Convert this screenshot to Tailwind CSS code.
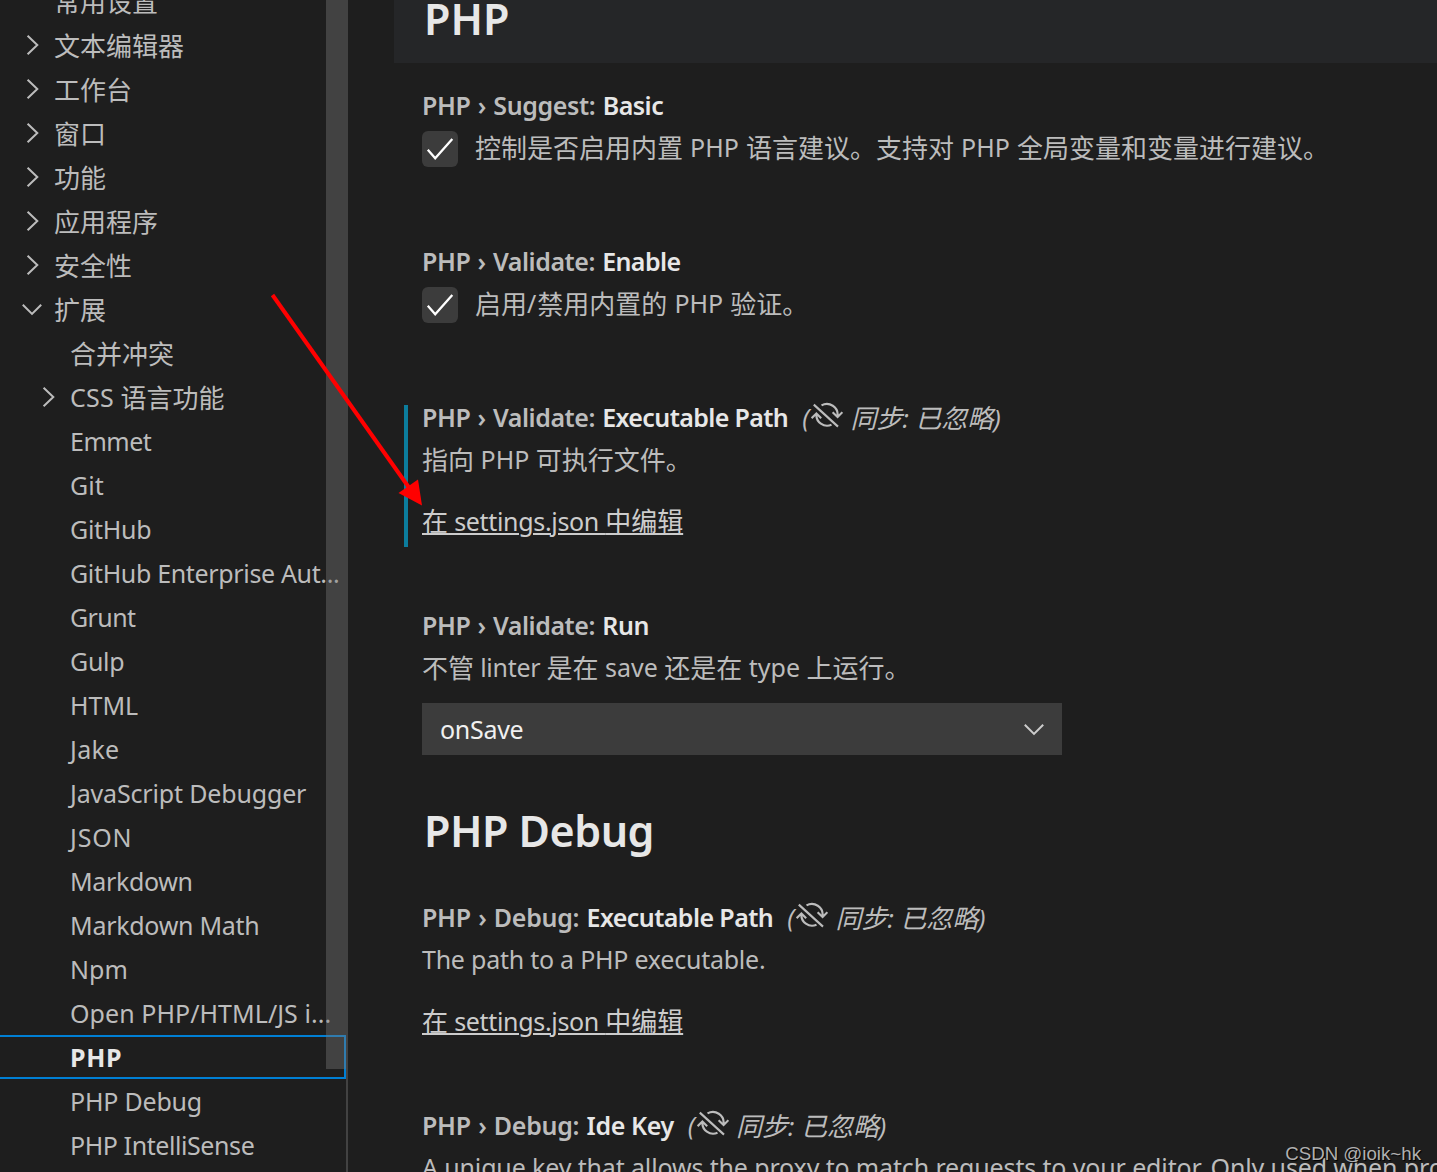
<!DOCTYPE html>
<html lang="zh-CN">
<head>
<meta charset="utf-8">
<title>Settings</title>
<script src="https://cdn.jsdelivr.net/npm/@tailwindcss/browser@4"></script>
</head>
<body class="relative h-screen overflow-hidden bg-[#1e1e1e] font-['Noto_Sans','Noto_Sans_CJK_SC',sans-serif] text-[26px] text-[#bcbcbc]">

<svg class="hidden">
  <symbol id="right" viewBox="0 0 24 24"><path d="M7.600 2.800 17.300 12 7.600 21.200" fill="none" stroke="currentColor" stroke-width="2"/></symbol>
  <symbol id="down" viewBox="0 0 24 24"><path d="M2.800 7.700 12 16.900 21.200 7.700" fill="none" stroke="currentColor" stroke-width="2"/></symbol>
  <symbol id="check" viewBox="0 0 36 36"><path d="M5.800 18.800 13.200 27.300 30.300 8" fill="none" stroke="#fff" stroke-width="2.300"/></symbol>
  <symbol id="sync" viewBox="0 0 32 32"><g fill="none" stroke="currentColor" stroke-width="2.100"><path d="M2.800 4.600 27 26.600M10.500 5.400A10.800 10.800 0 0 1 26.600 16M21.600 12.200 26.600 17 31.400 12.200M20.500 24.800A10.800 10.800 0 0 1 5.400 14M.6 18.200 5.400 13.400 10.200 18.200"/></g></symbol>
</svg>

<div class="flex h-full">
  <nav class="relative w-[348px] shrink-0 overflow-hidden border-r-2 border-[#424242]">
    <div class="-mt-[21px] whitespace-nowrap leading-[44px] *:h-11">
      <div class="pl-[54px] leading-[46px]">常用设置</div>
      <div class="flex items-center pl-5"><svg class="mr-2.5 size-6"><use href="#right"/></svg><span class="pt-0.5">文本编辑器</span></div>
      <div class="flex items-center pl-5"><svg class="mr-2.5 size-6"><use href="#right"/></svg><span class="pt-0.5">工作台</span></div>
      <div class="flex items-center pl-5"><svg class="mr-2.5 size-6"><use href="#right"/></svg><span class="pt-0.5">窗口</span></div>
      <div class="flex items-center pl-5"><svg class="mr-2.5 size-6"><use href="#right"/></svg><span class="pt-0.5">功能</span></div>
      <div class="flex items-center pl-5"><svg class="mr-2.5 size-6"><use href="#right"/></svg><span class="pt-0.5">应用程序</span></div>
      <div class="flex items-center pl-5"><svg class="mr-2.5 size-6"><use href="#right"/></svg><span class="pt-0.5">安全性</span></div>
      <div class="flex items-center pl-5"><svg class="mr-2.5 size-6"><use href="#down"/></svg><span class="pt-0.5">扩展</span></div>
      <div class="pl-[70px] leading-[46px]">合并冲突</div>
      <div class="flex items-center pl-9"><svg class="mr-2.5 size-6"><use href="#right"/></svg><span class="pt-px"><span class="align-[1px] text-[25px] tracking-[0.2px]">CSS </span>语言功能</span></div>
      <div class="pl-[70px] text-[25px] tracking-[-0.5px]">Emmet</div>
      <div class="pl-[70px] text-[25px]">Git</div>
      <div class="pl-[70px] text-[25px] tracking-[-0.3px]">GitHub</div>
      <div class="pl-[70px] text-[25px] tracking-[-0.34px]">GitHub Enterprise Aut...</div>
      <div class="pl-[70px] text-[25px] tracking-[-0.6px]">Grunt</div>
      <div class="pl-[70px] text-[25px] tracking-[-0.3px]">Gulp</div>
      <div class="pl-[70px] text-[25px]">HTML</div>
      <div class="pl-[70px] text-[25px] tracking-[0.3px]">Jake</div>
      <div class="pl-[70px] text-[25px] tracking-[-0.16px]">JavaScript Debugger</div>
      <div class="pl-[70px] text-[25px] tracking-[0.8px]">JSON</div>
      <div class="pl-[70px] text-[25px] tracking-[-0.35px]">Markdown</div>
      <div class="pl-[70px] text-[25px] tracking-[-0.28px]">Markdown Math</div>
      <div class="pl-[70px] text-[25px]">Npm</div>
      <div class="pl-[70px] text-[25px] tracking-[0.05px]">Open PHP/HTML/JS i...</div>
      <div class="border-2 border-l-0 border-[#007fd4] pl-[70px] text-[25px] leading-10 font-bold tracking-[0.7px] text-[#e7e7e7]">PHP</div>
      <div class="pl-[70px] text-[25px] tracking-[-0.2px]">PHP Debug</div>
      <div class="pl-[70px] text-[25px] tracking-[-0.42px]">PHP IntelliSense</div>
    </div>
  </nav>

  <main class="ml-[46px] -mt-[27px] min-w-0 flex-1 overflow-hidden whitespace-nowrap leading-9">
    <h2 class="h-[90px] bg-[#252628] pl-[30px] text-[43px] leading-[92px] font-semibold text-[#e7e7e7]">PHP</h2>

    <section class="h-[156px] pt-6 pl-7">
      <h3 class="text-[25px] font-semibold"><span class="tracking-[-0.38px] [word-spacing:1.2px]">PHP › Suggest: </span><span class="tracking-[-0.5px] text-[#e7e7e7]">Basic</span></h3>
      <div class="mt-1.5 flex">
        <span class="mt-0.5 mr-[17px] size-9 rounded-md bg-[#3c3c3c]"><svg class="size-9"><use href="#check"/></svg></span>
        <p>控制是否启用内置<span class="align-[1px] text-[25px] [word-spacing:0.6px]"> PHP </span>语言建议。支持对<span class="align-[1px] text-[25px] [word-spacing:0.6px]"> PHP </span>全局变量和变量进行建议。</p>
      </div>
    </section>

    <section class="h-[156px] pt-6 pl-7">
      <h3 class="text-[25px] font-semibold"><span class="tracking-[-0.45px] [word-spacing:1.2px]">PHP › Validate: </span><span class="tracking-[-0.6px] text-[#e7e7e7]">Enable</span></h3>
      <div class="mt-1.5 flex">
        <span class="mt-0.5 mr-[17px] size-9 rounded-md bg-[#3c3c3c]"><svg class="size-9"><use href="#check"/></svg></span>
        <p>启用<span class="align-[1px] text-[25px] tracking-[1px]">/</span>禁用内置的<span class="align-[1px] text-[25px] [word-spacing:0.6px]"> PHP </span>验证。</p>
      </div>
    </section>

    <section class="relative h-[208px] pt-6 pl-7">
      <div class="absolute top-[30px] left-2.5 h-[142px] w-1 bg-[#0c7d9d]"></div>
      <div class="flex h-9">
        <h3 class="text-[25px] font-semibold"><span class="tracking-[-0.45px] [word-spacing:1.2px]">PHP › Validate: </span><span class="tracking-[-0.62px] text-[#e7e7e7]">Executable Path</span></h3>
        <span class="ml-3.5 flex italic"><span class="text-[25px]">(</span><svg class="mt-px mr-[7px] ml-0.5 size-8"><use href="#sync"/></svg><span class="pt-px">同步<span class="text-[25px]">: </span>已忽略<span class="text-[25px]">)</span></span></span>
      </div>
      <p class="mt-1.5">指向<span class="align-[1px] text-[25px]"> PHP </span>可执行文件。</p>
      <a class="mt-[25px] block text-[#cccccc] underline decoration-2 underline-offset-2">在<span class="text-[25px] tracking-[-0.33px]"> settings.json </span>中编辑</a>
    </section>

    <section class="h-[202px] pt-6 pl-7">
      <h3 class="text-[25px] font-semibold"><span class="tracking-[-0.45px] [word-spacing:1.2px]">PHP › Validate: </span><span class="tracking-[-0.3px] text-[#e7e7e7]">Run</span></h3>
      <p class="mt-1.5">不管<span class="align-[1px] text-[25px] tracking-[-0.3px]"> linter </span>是在<span class="align-[1px] text-[25px]"> save </span>还是在<span class="align-[1px] text-[25px]"> type </span>上运行。</p>
      <div class="mt-[17px] flex h-[52px] w-[640px] items-center justify-between bg-[#3c3c3c] pr-4 pl-[18px] text-[25px] tracking-[-0.3px] text-[#f0f0f0]">onSave<svg class="size-6 text-[#cccccc]"><use href="#down"/></svg></div>
    </section>

    <h2 class="h-[90px] pl-[30px] text-[43px] leading-[92px] font-semibold tracking-[-0.5px] text-[#e7e7e7]">PHP Debug</h2>

    <section class="h-[208px] pt-6 pl-7">
      <div class="flex h-9">
        <h3 class="text-[25px] font-semibold"><span class="tracking-[-0.3px] [word-spacing:1.2px]">PHP › Debug: </span><span class="tracking-[-0.58px] text-[#e7e7e7]">Executable Path</span></h3>
        <span class="ml-3.5 flex italic"><span class="text-[25px]">(</span><svg class="mt-px mr-[7px] ml-0.5 size-8"><use href="#sync"/></svg><span class="pt-px">同步<span class="text-[25px]">: </span>已忽略<span class="text-[25px]">)</span></span></span>
      </div>
      <p class="mt-1.5 text-[25px] tracking-[-0.24px]">The path to a PHP executable.</p>
      <a class="mt-[26px] block text-[#cccccc] underline decoration-2 underline-offset-2">在<span class="text-[25px] tracking-[-0.33px]"> settings.json </span>中编辑</a>
    </section>

    <section class="pt-6 pl-7">
      <div class="flex h-9">
        <h3 class="text-[25px] font-semibold"><span class="tracking-[-0.3px] [word-spacing:1.2px]">PHP › Debug: </span><span class="tracking-[-0.4px] text-[#e7e7e7]">Ide Key</span></h3>
        <span class="ml-3.5 flex italic"><span class="text-[25px]">(</span><svg class="mt-px mr-[7px] ml-0.5 size-8"><use href="#sync"/></svg><span class="pt-px">同步<span class="text-[25px]">: </span>已忽略<span class="text-[25px]">)</span></span></span>
      </div>
      <p class="mt-1.5 text-[25px] tracking-[-0.14px]">A unique key that allows the proxy to match requests to your editor. Only used when proxying</p>
    </section>
  </main>
</div>

<!-- sidebar scrollbar thumb -->
<div class="absolute top-0 left-[326px] h-[1069px] w-5 bg-[#797979]/40"></div>

<!-- pointer arrow -->
<svg class="absolute top-0 left-0 h-full w-full" viewBox="0 0 1437 1172">
  <path d="M272.500 295 410 489" stroke="#ff0000" stroke-width="4"/>
  <path d="M422 505.500 398.500 493 418 479.500Z" fill="#ff0000"/>
</svg>

<div class="absolute right-4 bottom-1.5 font-['Liberation_Sans',sans-serif] text-[18.7px] leading-6 text-[#b0b0b0] [text-shadow:1px_1px_1px_#000]">CSDN @ioik~hk</div>
</body>
</html>
